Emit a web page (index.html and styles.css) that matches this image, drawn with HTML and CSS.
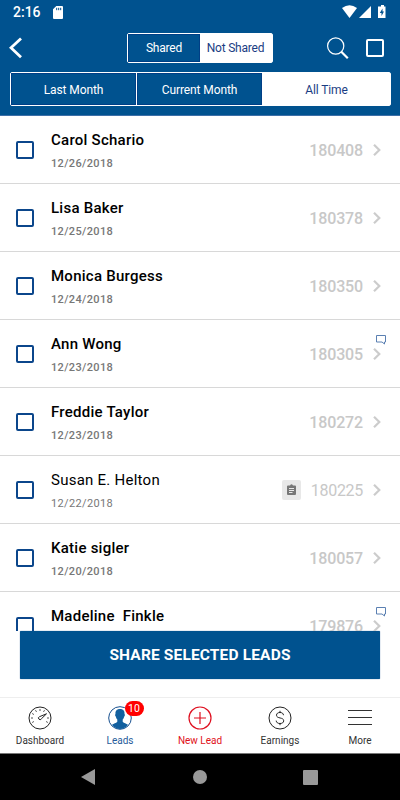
FILE: index.html
```html
<!DOCTYPE html>
<html lang="en">
<head>
<meta charset="utf-8">
<title>Leads</title>
<link rel="stylesheet" href="styles.css">
</head>
<body>
<svg class="defs" width="0" height="0" aria-hidden="true">
  <symbol id="chevron" viewBox="0 0 10 14"><path d="M2 1.8 7.3 7 2 12.2" fill="none" stroke="#ccc" stroke-width="2.2"/></symbol>
  <symbol id="comment" viewBox="0 0 12 11"><path d="M1.5 1.5h9v6.500H9.500V10L7 8H1.5z" fill="none" stroke="#5b80b2" stroke-width="1"/></symbol>
</svg>
<header class="header">
  <div class="status">
    <span class="time">2:16</span>
    <svg class="sd" width="10" height="13" viewBox="0 0 10 13"><path d="M3.3 0H9q1 0 1 1v11q0 1-1 1H1q-1 0-1-1V3.3z" fill="#fff"/><path d="M3.7 1.8v2.4M5.7 1.8v2.4M7.7 1.8v2.4" stroke="#00528f"/></svg>
    <svg class="signals" width="46" height="14" viewBox="0 0 46 14"><path d="M0 3Q7.500-2.500 15 3L7.500 13z" fill="#fff"/><path d="M29 1v12H17z" fill="#fff"/><path d="M37 1.500h2V0h3v1.500h1.500V13H36V1.500z" fill="#fff"/><path d="M40.500 3.500 37.800 8h1.700v3L42 6.500h-1.500z" fill="#00528f"/></svg>
  </div>
  <div class="nav">
    <svg class="back" width="14" height="22" viewBox="0 0 14 22"><path d="M12 1.500 2 10.800 12 20.200" fill="none" stroke="#fff" stroke-width="2.800"/></svg>
    <div class="segment share"><span>Shared</span><span class="on">Not Shared</span></div>
    <div class="tools">
      <svg width="22" height="23" viewBox="0 0 22 23"><circle cx="8.700" cy="9" r="8.100" fill="none" stroke="#fff" stroke-width="1.200"/><path d="m14.300 14.800 6.500 6.500" stroke="#fff" stroke-width="2.200"/></svg>
      <i class="check all"></i>
    </div>
  </div>
  <div class="segment period"><span>Last Month</span><span>Current Month</span><span class="on">All Time</span></div>
</header>
<main class="list">
  <div class="row"><i class="check"></i><div class="who"><b>Carol Schario</b><time>12/26/2018</time></div><span class="num">180408</span><svg class="go"><use href="#chevron"/></svg></div>
  <div class="row"><i class="check"></i><div class="who"><b>Lisa Baker</b><time>12/25/2018</time></div><span class="num">180378</span><svg class="go"><use href="#chevron"/></svg></div>
  <div class="row"><i class="check"></i><div class="who"><b>Monica Burgess</b><time>12/24/2018</time></div><span class="num">180350</span><svg class="go"><use href="#chevron"/></svg></div>
  <div class="row"><i class="check"></i><div class="who"><b>Ann Wong</b><time>12/23/2018</time></div><span class="num">180305</span><svg class="go"><use href="#chevron"/></svg><svg class="note"><use href="#comment"/></svg></div>
  <div class="row"><i class="check"></i><div class="who"><b>Freddie Taylor</b><time>12/23/2018</time></div><span class="num">180272</span><svg class="go"><use href="#chevron"/></svg></div>
  <div class="row read"><i class="check"></i><div class="who"><b>Susan E. Helton</b><time>12/22/2018</time></div><span class="clip"><svg width="9" height="11" viewBox="0 0 9 11"><path d="M1 1.500h2Q4.500-.8 6 1.500h2q1 0 1 1V10q0 1-1 1H1q-1 0-1-1V2.500q0-1 1-1z" fill="#777"/><path d="M2 4.500h5M2 6.500h5M2 8.500h3.500" stroke="#e8e8e8"/></svg></span><span class="num">180225</span><svg class="go"><use href="#chevron"/></svg></div>
  <div class="row"><i class="check"></i><div class="who"><b>Katie sigler</b><time>12/20/2018</time></div><span class="num">180057</span><svg class="go"><use href="#chevron"/></svg></div>
  <div class="row"><i class="check"></i><div class="who name-only"><b>Madeline&nbsp; Finkle</b></div><span class="num">179876</span><svg class="go"><use href="#chevron"/></svg><svg class="note"><use href="#comment"/></svg></div>
</main>
<div class="action"><button class="submit">SHARE SELECTED LEADS</button></div>
<nav class="tabs">
  <div class="tab"><svg width="24" height="24" viewBox="0 0 24 24" fill="none" stroke="#222"><circle cx="12" cy="12" r="11"/><path d="M12 3v2M7.500 4.200l1 1.700M4.200 7.500l1.700 1M3 12h2M4.200 16.500l1.700-1M16.500 4.200l-1 1.700M19 12h2M19.800 16.500l-1.700-1" stroke-width=".8"/><path d="m18.500 7.800-7 2.900a1.500 1.500 0 1 0 1.800 2.200z"/></svg><span>Dashboard</span></div>
  <div class="tab leads"><svg width="24" height="24" viewBox="0 0 24 24"><circle cx="12" cy="12" r="11.300" fill="#fff" stroke="#17508f"/><path d="M12 3c3.500 0 4.800 2.200 4.500 5 .6.300.5 2-.3 2.500-.3 1.700-1 2.400-1.500 3v2.300c1.300 1.500 3.500 1.700 5.300 3C18.300 21.500 15.500 23 12 23s-6.300-1.500-8-4.200c1.800-1.300 4-1.500 5.300-3v-2.300c-.5-.6-1.200-1.300-1.500-3C7 10 6.900 8.300 7.500 8 7.200 5.200 8.500 3 12 3z" fill="#12609f"/></svg><span>Leads</span><em class="badge">10</em></div>
  <div class="tab new"><svg width="24" height="24" viewBox="0 0 24 24" fill="none" stroke="#df1020" stroke-width="1.200"><circle cx="12" cy="12" r="11"/><path d="M12 6v12M6 12h12"/></svg><span>New Lead</span></div>
  <div class="tab"><svg width="24" height="24" viewBox="0 0 24 24" fill="none" stroke="#222"><circle cx="12" cy="12" r="11"/><path d="M15.500 9.200C15.300 7.300 14 6.500 12 6.500S8.500 7.400 8.500 9.200c0 3.800 7.200 1.700 7.200 5.600 0 1.800-1.500 2.700-3.700 2.700s-3.700-.9-3.800-2.900M12 4.800v1.700M12 17.500v1.700"/></svg><span>Earnings</span></div>
  <div class="tab"><svg width="24" height="24" viewBox="0 0 24 24"><path d="M0 4.500h24M0 11.500h24M0 18.500h24" stroke="#333"/></svg><span>More</span></div>
</nav>
<footer class="system">
  <svg width="14" height="16" viewBox="0 0 14 16"><path d="M14 0v16L0 8z" fill="#999"/></svg>
  <svg width="14" height="14" viewBox="0 0 14 14"><circle cx="7" cy="7" r="7" fill="#999"/></svg>
  <svg class="recent" width="15" height="15" viewBox="0 0 15 15"><rect width="15" height="15" rx="1" fill="#999"/></svg>
</footer>
</body>
</html>
```
FILE: styles.css
```css
* { box-sizing: border-box; }
body { margin: 0; width: 400px; height: 800px; overflow: hidden; display: flex; flex-direction: column; background: #fff; font-family: Roboto, sans-serif; }
svg { display: block; flex: none; }
.defs { position: absolute; }
.header { height: 116px; flex: none; background: #00528f; border-bottom: 1px solid #3d6fa8; color: #fff; }
.status { height: 24px; display: flex; align-items: center; padding: 0 12px 0 13px; font-size: 14px; font-weight: 500; }
.time { width: 40px; }
.signals { margin-left: auto; }
.nav { height: 48px; display: flex; align-items: center; padding: 0 16px 0 9px; }
.back { width: 14px; }
.segment { display: flex; border: 1px solid #fff; border-radius: 2px; font-size: 12px; letter-spacing: -.2px; }
.segment span { display: flex; align-items: center; justify-content: center; box-shadow: inset 0 0 0 1px #003f86; }
.segment span + span { border-left: 1px solid #fff; }
.segment .on { background: #fff; color: #1a3d83; box-shadow: none; }
.share { width: 146px; height: 30px; margin-left: 104px; }
.share span { width: 72px; }
.share .on { padding-right: 2px; }
.tools { display: flex; align-items: center; gap: 17px; margin-left: auto; }
.period { width: 381px; height: 34px; margin-left: 10px; letter-spacing: -.1px; }
.period span { width: 126px; padding-top: 1px; }
.period span:first-child { width: 125px; }
.period .on { flex: 1; }
.check { width: 18px; height: 18px; border: 2px solid #0b468b; border-radius: 2px; flex: none; }
.check.all { border-color: #fff; }
.list { height: 515px; flex: none; overflow: hidden; }
.row { position: relative; height: 68px; display: flex; align-items: center; padding: 0 18px 0 16px; border-bottom: 1px solid #d8d8d8; }
.who { display: flex; flex-direction: column; margin: 0 auto 0 17px; padding-top: 2px; }
.name-only { padding-bottom: 21px; }
.who b { font-size: 15px; line-height: 20px; font-weight: 500; color: #000; letter-spacing: .25px; }
.who time { font-size: 11px; line-height: 14px; margin-top: 7px; font-weight: 500; color: #777; letter-spacing: .35px; }
.num { padding-top: 1px; font-size: 16px; font-weight: 500; color: #c8c8c8; letter-spacing: -.15px; }
.go { width: 10px; height: 14px; margin-left: 9px; }
.note { position: absolute; right: 13px; top: 14px; width: 12px; height: 11px; }
.read b, .read time, .read .num { font-weight: 400; }
.read .num { letter-spacing: -.3px; }
.clip { width: 19px; height: 20px; margin-right: 10px; display: flex; align-items: center; justify-content: center; background: #e8e8e8; border-radius: 2px; }
.action { height: 67px; flex: none; padding: 0 20px; border-bottom: 1px solid #eee; }
.submit { display: block; width: 100%; height: 48px; padding: 0; border: 0; border-radius: 1px; background: #00528f; box-shadow: 0 0 1px #003f86; color: #fff; font: 700 15.5px Roboto, sans-serif; letter-spacing: .15px; }
.tabs { height: 56px; flex: none; display: flex; border-bottom: 1px solid #777; }
.tab { position: relative; width: 80px; display: flex; flex-direction: column; align-items: center; padding-top: 8px; font-size: 10px; color: #333; }
.tab span { line-height: 14px; margin-top: 4px; }
.leads { color: #285c9b; }
.new { color: #df1020; }
.badge { position: absolute; left: 44.5px; top: 3px; width: 19px; height: 15px; border-radius: 8px; background: #f00; color: #fff; font-size: 10.5px; font-style: normal; line-height: 15px; text-align: center; }
.system { height: 46px; background: #000; display: flex; align-items: center; padding-left: 81px; gap: 98px; }
.recent { margin-left: -2px; }
```
